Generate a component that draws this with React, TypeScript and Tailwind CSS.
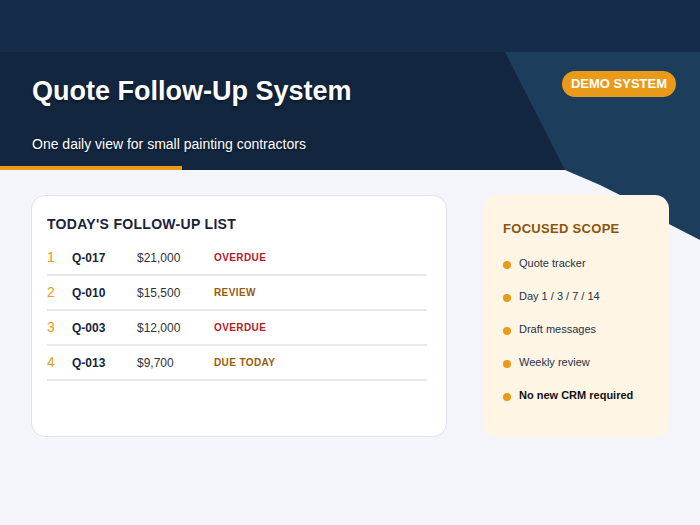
import React from "react";

const rows = [
  { n: "1", q: "Q-017", a: "$21,000", s: "OVERDUE", c: "text-[#b3202a]" },
  { n: "2", q: "Q-010", a: "$15,500", s: "REVIEW", c: "text-[#9a5b0c]" },
  { n: "3", q: "Q-003", a: "$12,000", s: "OVERDUE", c: "text-[#b3202a]" },
  { n: "4", q: "Q-013", a: "$9,700", s: "DUE TODAY", c: "text-[#9a5b0c]" },
];
const scope = ["Quote tracker", "Day 1 / 3 / 7 / 14", "Draft messages", "Weekly review"];

export default function App() {
  return (
    <div className="relative w-[700px] h-[525px] overflow-hidden bg-[#f4f5fa]" style={{ fontFamily: '"Liberation Sans", Arial, sans-serif' }}>
      <svg className="absolute inset-0" width="700" height="525">
        <rect x="0" y="0" width="700" height="52" fill="#152d4b" />
        <rect x="0" y="52" width="700" height="118" fill="#13263f" />
        <polygon points="505,52 700,52 700,240 665,222 620,195 600,185 565,170" fill="#1c3d5c" />
        <rect x="0" y="166" width="182" height="4" fill="#e89a18" />
      </svg>
      <div className="relative">
        <div className="h-[52px]" />
        <div className="h-[118px] px-[32px] relative">
          <h1 className="pt-[26px] text-[27px] font-bold text-white leading-none [text-shadow:0_2px_3px_rgba(0,0,0,0.4)]">Quote Follow-Up System</h1>
          <p className="mt-[29px] text-[14px] text-white [text-shadow:0_1px_2px_rgba(0,0,0,0.5)]">One daily view for small painting contractors</p>
          <div className="absolute right-[24px] top-[19px] bg-[#e89a18] text-white font-bold text-[13px] rounded-full px-[9px] h-[26px] flex items-center">DEMO SYSTEM</div>
        </div>
        <div className="flex gap-[36px] px-[31px] pt-[25px]">
          <div className="w-[416px] h-[242px] bg-white rounded-[14px] border border-[#dfe2ea] px-[15px] pt-[18px]">
            <h2 className="text-[14px] font-bold text-[#18233a] tracking-[0.3px]">TODAY'S FOLLOW-UP LIST</h2>
            <div className="mt-[6px] w-[380px]">
              {rows.map((r) => (
                <div key={r.n} className="flex items-center h-[35px] border-b-2 border-[#e8e9ee] text-[12px]">
                  <span className="w-[25px] text-[#e89a18] text-[14px]">{r.n}</span>
                  <span className="w-[65px] font-bold text-[#18233a]">{r.q}</span>
                  <span className="w-[77px] text-[#333]">{r.a}</span>
                  <span className={`font-bold text-[10px] tracking-[0.4px] ${r.c}`}>{r.s}</span>
                </div>
              ))}
            </div>
          </div>
          <div className="w-[186px] h-[242px] bg-[#fff5e4] rounded-[14px] px-[20px] pt-[24px]">
            <h3 className="text-[13px] font-bold text-[#8a5410] tracking-[0.3px]">FOCUSED SCOPE</h3>
            <div className="mt-[8px] flex flex-col">
              {scope.concat(["No new CRM required"]).map((s, i) => (
                <div key={s} className="flex items-center h-[33px] gap-[8px] text-[11px] text-[#25304a]">
                  <span className="w-[8px] h-[8px] rounded-full bg-[#e89a18] mt-[4px]" />
                  <span className={i === 4 ? "font-bold text-[#111]" : ""}>{s}</span>
                </div>
              ))}
            </div>
          </div>
        </div>
      </div>
    </div>
  );
}
